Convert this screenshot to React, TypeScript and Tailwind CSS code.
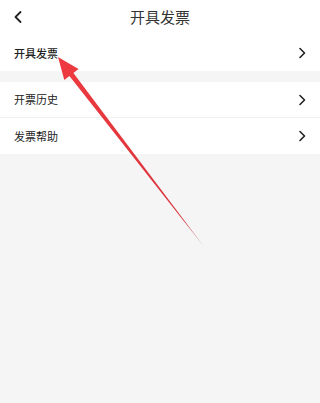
import React from "react";

const Chevron = () => (
  <svg width="8" height="12" viewBox="0 0 8 12" fill="none">
    <path d="M2 1.5L6.5 6L2 10.5" stroke="#222" strokeWidth="1.6" strokeLinecap="round" strokeLinejoin="round" />
  </svg>
);

const Row = ({ label, border, bold }: { label: string; border?: boolean; bold?: boolean }) => (
  <div className={`flex items-center justify-between h-[36px] pl-[14px] pr-[14px] bg-white ${border ? "border-b border-[#f0f0f0]" : ""}`}>
    <span className={`text-[11px] text-[#222] ${bold ? "font-medium" : ""}`}>{label}</span>
    <Chevron />
  </div>
);

export default function App() {
  return (
    <div
      className="relative w-[320px] h-[403px] bg-[#f5f5f5] overflow-hidden"
      style={{ fontFamily: '"Noto Sans CJK SC", "Noto Sans", sans-serif' }}
    >
      <div className="bg-white">
        <div className="relative flex items-center justify-center h-[35px]">
          <svg className="absolute left-[12px] top-[10px]" width="12" height="14" viewBox="0 0 12 14" fill="none">
            <path d="M8.5 2L3.5 7L8.5 12" stroke="#222" strokeWidth="1.8" strokeLinecap="round" strokeLinejoin="round" />
          </svg>
          <span className="text-[15px] text-[#333]">开具发票</span>
        </div>
        <Row label="开具发票" bold />
      </div>
      <div className="h-[11px]" />
      <Row label="开票历史" border />
      <Row label="发票帮助" />
      <svg className="absolute left-0 top-0 pointer-events-none" width="320" height="403" viewBox="0 0 320 403">
        <defs>
          <linearGradient id="g" x1="60" y1="60" x2="205" y2="248" gradientUnits="userSpaceOnUse">
            <stop offset="0" stopColor="#ee3a40" />
            <stop offset="0.85" stopColor="#d8343c" />
            <stop offset="1" stopColor="#b0a0b0" />
          </linearGradient>
        </defs>
        <polygon
          points="58,57 78.5,68.9 73.4,72.9 205,248 69.4,75.9 64.3,79.9"
          fill="url(#g)"
        />
      </svg>
    </div>
  );
}
